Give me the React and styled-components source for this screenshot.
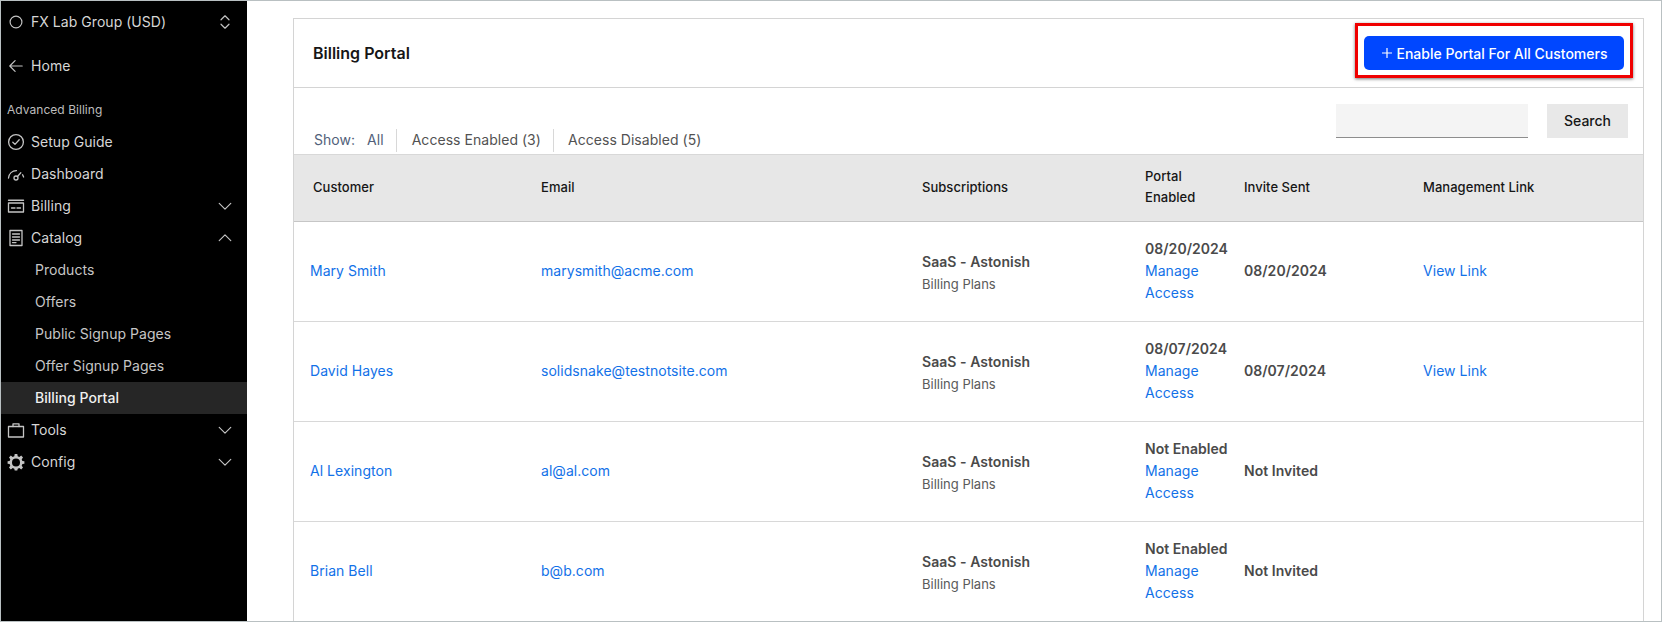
import React from 'react'
import styled, { createGlobalStyle } from 'styled-components'

const GlobalStyle = createGlobalStyle`
    html, body {
        margin: 0;
        padding: 0;
        height: 622px;
        overflow: hidden;
        background: #fff;
    }
    * {
        box-sizing: border-box;
    }
`

const customers = [
    { name: 'Mary Smith', email: 'marysmith@acme.com', enabled: '08/20/2024', invite: '08/20/2024', link: true },
    { name: 'David Hayes', email: 'solidsnake@testnotsite.com', enabled: '08/07/2024', invite: '08/07/2024', link: true },
    { name: 'Al Lexington', email: 'al@al.com', enabled: 'Not Enabled', invite: 'Not Invited' },
    { name: 'Brian Bell', email: 'b@b.com', enabled: 'Not Enabled', invite: 'Not Invited' },
]

const Icon = ({ size = 18, children }) => (
    <svg width={size} height={size} viewBox="0 0 18 18" fill="none" stroke="currentColor" strokeWidth="1.3" strokeLinecap="round" strokeLinejoin="round">
        {children}
    </svg>
)

const Chevron = ({ up }) => (
    <Icon size={16}>
        <path d={up ? 'M2.5 12L9 5.5L15.5 12' : 'M2.5 6L9 12.5L15.5 6'} />
    </Icon>
)

const icons = {
    setup: <><circle cx="9" cy="9" r="7.4" /><path d="M5.8 9.2L8 11.4L12.2 6.8" /></>,
    dashboard: <><path d="M1.5 13C2 8.5 5.2 5.6 9.5 5.6" /><circle cx="9" cy="13" r="2" /><path d="M10.5 11.5L13.8 7.8M15.6 9.8L16.6 12" /></>,
    billing: <><path d="M1.5 3.2H16.5" strokeWidth="1.4" /><rect x="1.5" y="6" width="15" height="9" /><path d="M4.5 11H8M10 11H13.5" /></>,
    catalog: <><rect x="3" y="1.5" width="12" height="15" /><path d="M5.5 5H12.5M5.5 8H12.5M5.5 11H12.5M5.5 13.6H9" /></>,
    tools: <><rect x="1.5" y="5.5" width="15" height="10.5" /><path d="M6 5.5V2.8H12V5.5" /></>,
}

const NavRow = ({ icon, label, chevron }) => (
    <NavItem>
        <NavIcon>{icon}</NavIcon>
        <NavLabel>{label}</NavLabel>
        {chevron && <NavChevron><Chevron up={chevron === 'up'} /></NavChevron>}
    </NavItem>
)

function App() {
    return (
        <Page>
            <GlobalStyle />
            <Sidebar>
                <NavItem>
                    <NavIcon>
                        <Icon size={14}><circle cx="9" cy="9" r="7.6" strokeWidth="1.5" /></Icon>
                    </NavIcon>
                    <NavLabel>FX Lab Group (USD)</NavLabel>
                    <NavChevron>
                        <Icon size={16}><path d="M4.5 6.5L9 2L13.5 6.5M4.5 11.5L9 16L13.5 11.5" /></Icon>
                    </NavChevron>
                </NavItem>
                <HomeRow>
                    <NavRow icon={<Icon size={16}><path d="M16 9H2M8 3L2 9L8 15" /></Icon>} label="Home" />
                </HomeRow>
                <SectionTitle>Advanced Billing</SectionTitle>
                <NavRow icon={<Icon>{icons.setup}</Icon>} label="Setup Guide" />
                <NavRow icon={<Icon>{icons.dashboard}</Icon>} label="Dashboard" />
                <NavRow icon={<Icon>{icons.billing}</Icon>} label="Billing" chevron="down" />
                <NavRow icon={<Icon>{icons.catalog}</Icon>} label="Catalog" chevron="up" />
                <SubItem>Products</SubItem>
                <SubItem>Offers</SubItem>
                <SubItem>Public Signup Pages</SubItem>
                <SubItem>Offer Signup Pages</SubItem>
                <SubItem $active>Billing Portal</SubItem>
                <NavRow icon={<Icon>{icons.tools}</Icon>} label="Tools" chevron="down" />
                <NavRow
                    icon={
                        <svg width="18" height="18" viewBox="0 0 18 18">
                            <path
                                fill="currentColor"
                                fillRule="evenodd"
                                d="M7.7 1H10.3L10.7 3.2L12.3 3.9L14.2 2.6L16 4.4L14.7 6.3L15.4 7.9L17.4 8.3V10.7L15.4 11.1L14.7 12.7L16 14.6L14.2 16.4L12.3 15.1L10.7 15.8L10.3 17.5H7.7L7.3 15.8L5.7 15.1L3.8 16.4L2 14.6L3.3 12.7L2.6 11.1L0.6 10.7V8.3L2.6 7.9L3.3 6.3L2 4.4L3.8 2.6L5.7 3.9L7.3 3.2ZM9 5.4A4 4 0 1 0 9 13.4A4 4 0 1 0 9 5.4Z"
                            />
                        </svg>
                    }
                    label="Config"
                    chevron="down"
                />
            </Sidebar>
            <Main>
                <Card>
                    <CardHeader>
                        <CardTitle>Billing Portal</CardTitle>
                        <Highlight>
                            <PrimaryButton>
                                <svg width="12" height="12" viewBox="0 0 12 12" stroke="currentColor" strokeWidth="1.2">
                                    <path d="M6 1V11M1 6H11" />
                                </svg>
                                Enable Portal For All Customers
                            </PrimaryButton>
                        </Highlight>
                    </CardHeader>
                    <Toolbar>
                        <Filters>
                            <ShowLabel>Show:</ShowLabel>
                            <FilterLink $first $accent>All</FilterLink>
                            <FilterLink>Access Enabled (3)</FilterLink>
                            <FilterLink $last>Access Disabled (5)</FilterLink>
                        </Filters>
                        <SearchBox>
                            <SearchInput />
                            <SearchButton>Search</SearchButton>
                        </SearchBox>
                    </Toolbar>
                    <Table>
                        <colgroup>
                            <col width="231" />
                            <col width="381" />
                            <col width="223" />
                            <col width="99" />
                            <col width="179" />
                            <col />
                        </colgroup>
                        <thead>
                            <tr>
                                <HeadCell $first>Customer</HeadCell>
                                <HeadCell>Email</HeadCell>
                                <HeadCell>Subscriptions</HeadCell>
                                <HeadCell>Portal Enabled</HeadCell>
                                <HeadCell>Invite Sent</HeadCell>
                                <HeadCell>Management Link</HeadCell>
                            </tr>
                        </thead>
                        <tbody>
                            {customers.map((c) => (
                                <tr key={c.name}>
                                    <Cell><TextLink>{c.name}</TextLink></Cell>
                                    <Cell><TextLink>{c.email}</TextLink></Cell>
                                    <SubscriptionCell>
                                        <Strong>SaaS - Astonish</Strong>
                                        <Muted>Billing Plans</Muted>
                                    </SubscriptionCell>
                                    <Cell>
                                        <Strong>{c.enabled}</Strong>
                                        <TextLink>Manage Access</TextLink>
                                    </Cell>
                                    <Cell><Strong>{c.invite}</Strong></Cell>
                                    <Cell>{c.link && <TextLink>View Link</TextLink>}</Cell>
                                </tr>
                            ))}
                        </tbody>
                    </Table>
                </Card>
            </Main>
        </Page>
    )
}

const Page = styled.div`
    width: 1662px;
    height: 622px;
    display: flex;
    overflow: hidden;
    border: 1px solid #b9c0c2;
    background: #fff;
    font-family: Inter, "Liberation Sans", sans-serif;
    font-size: 14px;
    letter-spacing: 0.04px;
`

const Sidebar = styled.nav`
    width: 246px;
    flex-shrink: 0;
    padding-top: 5px;
    background: #000;
    color: #d6d6d6;
`

const NavItem = styled.div`
    height: 32px;
    display: flex;
    align-items: center;
    padding: 0 14px 0 6px;
`

const NavIcon = styled.span`
    width: 18px;
    height: 18px;
    margin-right: 6px;
    display: flex;
    align-items: center;
    justify-content: center;
    color: #c4c4c4;
`

const NavLabel = styled.span`
    flex: 1;
    padding-bottom: 1px;
    white-space: nowrap;
`

const NavChevron = styled.span`
    display: flex;
    color: #c4c4c4;
`

const HomeRow = styled.div`
    margin-top: 12px;
`

const SectionTitle = styled.div`
    height: 32px;
    margin-top: 12px;
    padding: 0 0 2px 6px;
    display: flex;
    align-items: center;
    font-size: 12px;
    color: #bdbdbd;
`

const SubItem = styled.div`
    height: 32px;
    padding: 0 0 1px 34px;
    display: flex;
    align-items: center;
    background: ${(props) => (props.$active ? '#262626' : 'transparent')};
    color: ${(props) => (props.$active ? '#f0f0f0' : '#c6c6c6')};
    font-weight: ${(props) => (props.$active ? 500 : 400)};
`

const Main = styled.main`
    flex: 1;
    min-width: 0;
    padding: 17px 17px 0 46px;
`

const Card = styled.section`
    height: 100%;
    border: 1px solid #d4d4d4;
    border-bottom: none;
`

const CardHeader = styled.header`
    height: 69px;
    padding: 4px 10px 0 19px;
    display: flex;
    align-items: flex-start;
    justify-content: space-between;
    border-bottom: 1px solid #d4d4d4;
`

const CardTitle = styled.h1`
    margin: 18px 0 0;
    font-size: 16px;
    line-height: 24px;
    font-weight: 600;
    letter-spacing: 0;
    color: #161616;
`

const Highlight = styled.div`
    padding: 10px 6px 5px;
    border: 3px solid #f00000;
    box-shadow: 0 1px 3px rgba(0, 0, 0, 0.55);
`

const PrimaryButton = styled.button`
    width: 260px;
    height: 34px;
    display: flex;
    align-items: center;
    justify-content: center;
    gap: 4px;
    border: none;
    border-radius: 5px;
    background: #0047ff;
    color: #fff;
    font: inherit;
    font-weight: 500;
    letter-spacing: 0;
`

const Toolbar = styled.div`
    height: 66px;
    padding: 0 15px 0 20px;
    display: flex;
    justify-content: space-between;
`

const Filters = styled.div`
    align-self: flex-end;
    margin-bottom: 2px;
    display: flex;
    align-items: center;
`

const ShowLabel = styled.span`
    margin-right: 12px;
    padding-bottom: 2px;
    color: #525f7a;
`

const FilterLink = styled.span`
    height: 23px;
    display: flex;
    align-items: center;
    padding: ${(props) => (props.$first ? '0 12px 2px 0' : props.$last ? '0 13px 2px 14px' : '0 12px 2px 15px')};
    border-right: ${(props) => (props.$last ? 'none' : '1px solid #d8d8d8')};
    color: ${(props) => (props.$accent ? '#525f7a' : '#525252')};
`

const SearchBox = styled.div`
    margin-top: 16px;
    display: flex;
    align-items: flex-start;
    gap: 19px;
`

const SearchInput = styled.input`
    width: 192px;
    height: 34px;
    padding: 0 12px;
    border: none;
    border-bottom: 1px solid #8d8d8d;
    border-radius: 0;
    outline: none;
    background: #f4f4f4;
`

const SearchButton = styled.button`
    width: 81px;
    height: 34px;
    padding: 0 0 2px;
    border: none;
    background: #e8e8e8;
    color: #161616;
    font: inherit;
    font-weight: 500;
`

const Table = styled.table`
    width: 100%;
    table-layout: fixed;
    border-collapse: collapse;
`

const HeadCell = styled.th`
    height: 67px;
    padding: 0 0 2px ${(props) => (props.$first ? '19px' : '16px')};
    border-top: 1px solid #d8d8d8;
    border-bottom: 1px solid #c6c6c6;
    background: #e7e7e7;
    color: #161616;
    font-size: 13px;
    font-weight: 500;
    line-height: 21px;
    text-align: left;
`

const Cell = styled.td`
    height: 100px;
    padding: 0 0 1px 16px;
    border-bottom: 1px solid #d8d8d8;
    line-height: 22px;
    vertical-align: middle;
`

const SubscriptionCell = styled(Cell)`
    padding: 3px 0 0 16px;
`

const TextLink = styled.a`
    color: #1271e8;
    cursor: pointer;
`

const Strong = styled.div`
    color: #4a4a4a;
    font-weight: 600;
`

const Muted = styled.div`
    color: #5a5a5a;
    font-size: 13px;
    letter-spacing: 0;
`

export default App
